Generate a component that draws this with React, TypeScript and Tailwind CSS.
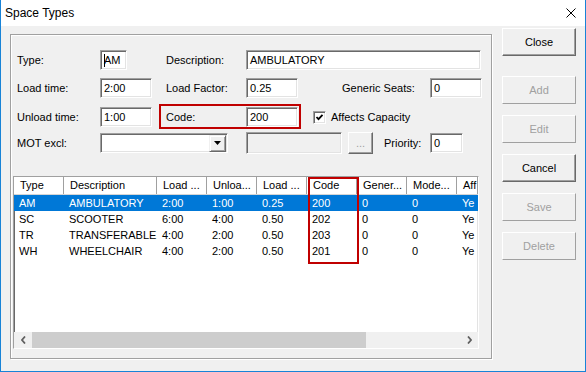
import React from 'react';

const sunken =
  'border border-t-[#a0a0a0] border-l-[#a0a0a0] border-r-white border-b-white shadow-[inset_1px_1px_0_#696969,inset_-1px_-1px_0_#e3e3e3]';

const Field = ({ w, value, h = 'h-[20px]', disabled, children }: { w: string; value?: string; h?: string; disabled?: boolean; children?: React.ReactNode }) => (
  <div className={`${w} ${h} shrink-0 flex items-center pl-[3px] overflow-hidden whitespace-nowrap ${sunken} ${disabled ? 'bg-[#f0f0f0]' : 'bg-white'}`}>
    {children}
    {value}
  </div>
);

const Label = ({ w, text }: { w: string; text: string }) => (
  <div className={`${w} shrink-0 whitespace-nowrap`}>{text}</div>
);

const Btn = ({ label, disabled }: { label: string; disabled?: boolean }) => (
  <div
    className={`h-[28px] w-[74px] flex items-center justify-center bg-[#f0f0f0] border border-t-white border-l-white ${
      disabled
        ? 'border-r-[#a0a0a0] border-b-[#a0a0a0] text-[#a0a0a0]'
        : 'border-r-[#696969] border-b-[#696969] shadow-[inset_-1px_-1px_0_#a0a0a0] text-black'
    }`}
  >
    {label}
  </div>
);

// last column is cut by the list edge, as in the dialog
const colW = ['w-[50px]', 'w-[93px]', 'w-[50px]', 'w-[50px]', 'w-[50px]', 'w-[50px]', 'w-[50px]', 'w-[50px]', 'w-[21px]'];
const headers = ['Type', 'Description', 'Load ...', 'Unloa...', 'Load ...', 'Code', 'Gener...', 'Mode...', 'Aff'];
const rows = [
  ['AM', 'AMBULATORY', '2:00', '1:00', '0.25', '200', '0', '0', 'Ye'],
  ['SC', 'SCOOTER', '6:00', '4:00', '0.50', '202', '0', '0', 'Ye'],
  ['TR', 'TRANSFERABLE', '4:00', '2:00', '0.50', '203', '0', '0', 'Ye'],
  ['WH', 'WHEELCHAIR', '4:00', '2:00', '0.50', '201', '0', '0', 'Ye'],
];

export default function App() {
  return (
    <div className="w-[586px] h-[372px] flex flex-col border-l border-r border-b border-[#1883d7] font-['Liberation_Sans',Arial,sans-serif] text-[11px] text-black overflow-hidden">
      {/* title bar */}
      <div className="h-[26px] shrink-0 bg-white flex items-center justify-between pl-[4px] pr-[9px]">
        <span className="text-[12px]">Space Types</span>
        <svg width="10" height="10" viewBox="0 0 10 10">
          <path d="M0.5 0.5 L9.5 9.5 M9.5 0.5 L0.5 9.5" stroke="#000" strokeWidth="1" />
        </svg>
      </div>

      <div className="flex-1 bg-[#f0f0f0] flex pl-[9px]">
        {/* group box */}
        <div className="mt-[8px] w-[482px] h-[325px] border border-[#a0a0a0] shadow-[inset_1px_1px_0_#fff,1px_1px_0_#fff] flex flex-col">
          {/* row 1 */}
          <div className="mt-[15px] ml-[6px] h-[20px] flex items-center">
            <Label w="w-[83px]" text="Type:" />
            <Field w="w-[27px]" value="AM">
              <span className="w-px h-[13px] bg-black -mr-px shrink-0" />
            </Field>
            <div className="w-[39px] shrink-0" />
            <Label w="w-[80px]" text="Description:" />
            <Field w="w-[235px]" value="AMBULATORY" />
          </div>

          {/* row 2 */}
          <div className="mt-[8px] ml-[6px] h-[20px] flex items-center">
            <Label w="w-[83px]" text="Load time:" />
            <Field w="w-[52px]" value="2:00" />
            <div className="w-[14px] shrink-0" />
            <Label w="w-[80px]" text="Load Factor:" />
            <Field w="w-[52px]" value="0.25" />
            <div className="w-[44px] shrink-0" />
            <Label w="w-[88px]" text="Generic Seats:" />
            <Field w="w-[52px]" value="0" />
          </div>

          {/* row 3 */}
          <div className="mt-[9px] ml-[6px] h-[20px] flex items-center">
            <Label w="w-[83px]" text="Unload time:" />
            <Field w="w-[52px]" value="1:00" />
            <div className="relative flex items-center h-[20px]">
              <div className="w-[14px] shrink-0" />
              <Label w="w-[80px]" text="Code:" />
              <Field w="w-[52px]" value="200" />
              <div className="absolute left-[7px] -top-[3px] w-[142px] h-[25px] border-2 border-[#c00000] pointer-events-none" />
            </div>
            <div className="w-[15px] shrink-0" />
            <div className={`w-[13px] h-[13px] shrink-0 bg-white flex items-center justify-center ${sunken}`}>
              <svg width="9" height="9" viewBox="0 0 9 9">
                <polyline points="1.5,4 3.5,6.2 7.5,1.8" fill="none" stroke="#000" strokeWidth="1.8" />
              </svg>
            </div>
            <div className="ml-[5px] whitespace-nowrap">Affects Capacity</div>
          </div>

          {/* row 4 */}
          <div className="mt-[5px] ml-[6px] h-[22px] flex items-center">
            <Label w="w-[83px]" text="MOT excl:" />
            <div className={`w-[128px] h-[20px] shrink-0 bg-white flex justify-end items-center pr-[1px] ${sunken}`}>
              <div className="w-[17px] h-[17px] bg-[#f0f0f0] flex items-center justify-center border border-t-[#f0f0f0] border-l-[#f0f0f0] border-r-[#696969] border-b-[#696969] shadow-[inset_1px_1px_0_#fff,inset_-1px_-1px_0_#a0a0a0]">
                <svg width="7" height="4" viewBox="0 0 7 4">
                  <polygon points="0,0 7,0 3.5,4" fill="#000" />
                </svg>
              </div>
            </div>
            <div className="w-[18px] shrink-0" />
            <Field w="w-[96px]" h="h-[22px]" disabled />
            <div className="w-[6px] shrink-0" />
            <div className="w-[25px] h-[22px] shrink-0 bg-[#f0f0f0] flex items-center justify-center text-[#a0a0a0] border border-t-white border-l-white border-r-[#696969] border-b-[#696969] shadow-[inset_-1px_-1px_0_#a0a0a0]">
              ...
            </div>
            <div className="w-[11px] shrink-0" />
            <Label w="w-[46px]" text="Priority:" />
            <Field w="w-[33px]" value="0" />
          </div>

          {/* list view */}
          <div className={`relative mt-[22px] ml-[2px] w-[466px] h-[173px] bg-white flex flex-col overflow-hidden ${sunken}`}>
            <div className="flex h-[18px] shrink-0 bg-white border-b border-[#d5d5d5]">
              {headers.map((h, i) => (
                <div
                  key={i}
                  className={`${colW[i]} shrink-0 h-full flex items-center pl-[6px] whitespace-nowrap overflow-hidden border-r border-[#a0a0a0] shadow-[inset_1px_1px_0_#fff] bg-white`}
                >
                  {h}
                </div>
              ))}
            </div>
            {rows.map((r, ri) => (
              <div key={ri} className={`flex h-[16px] shrink-0 items-center ${ri === 0 ? 'bg-[#0078d7] text-white' : ''}`}>
                {r.map((c, ci) => (
                  <div key={ci} className={`${colW[ci]} shrink-0 pl-[5px] whitespace-nowrap overflow-hidden`}>
                    {c}
                  </div>
                ))}
              </div>
            ))}
            <div className="flex-1" />
            {/* horizontal scrollbar */}
            <div className="h-[16px] shrink-0 bg-[#f0f0f0] flex items-center">
              <div className="w-[18px] h-full flex items-center justify-center">
                <svg width="5" height="8" viewBox="0 0 5 8">
                  <polyline points="4,0.5 1,4 4,7.5" fill="none" stroke="#606060" strokeWidth="1.8" />
                </svg>
              </div>
              <div className="w-[334px] h-full bg-[#cdcdcd]" />
              <div className="flex-1" />
              <div className="w-[17px] h-full flex items-center justify-center">
                <svg width="5" height="8" viewBox="0 0 5 8">
                  <polyline points="1,0.5 4,4 1,7.5" fill="none" stroke="#606060" strokeWidth="1.8" />
                </svg>
              </div>
            </div>
            <div className="absolute left-[294px] top-0 w-[51px] h-[87px] border-2 border-[#c00000] pointer-events-none" />
          </div>
        </div>

        {/* right buttons */}
        <div className="ml-[10px] mt-[2px] flex flex-col">
          <Btn label="Close" />
          <div className="h-[20px]" />
          <Btn label="Add" disabled />
          <div className="h-[11px]" />
          <Btn label="Edit" disabled />
          <div className="h-[11px]" />
          <Btn label="Cancel" />
          <div className="h-[11px]" />
          <Btn label="Save" disabled />
          <div className="h-[11px]" />
          <Btn label="Delete" disabled />
        </div>
      </div>
    </div>
  );
}
